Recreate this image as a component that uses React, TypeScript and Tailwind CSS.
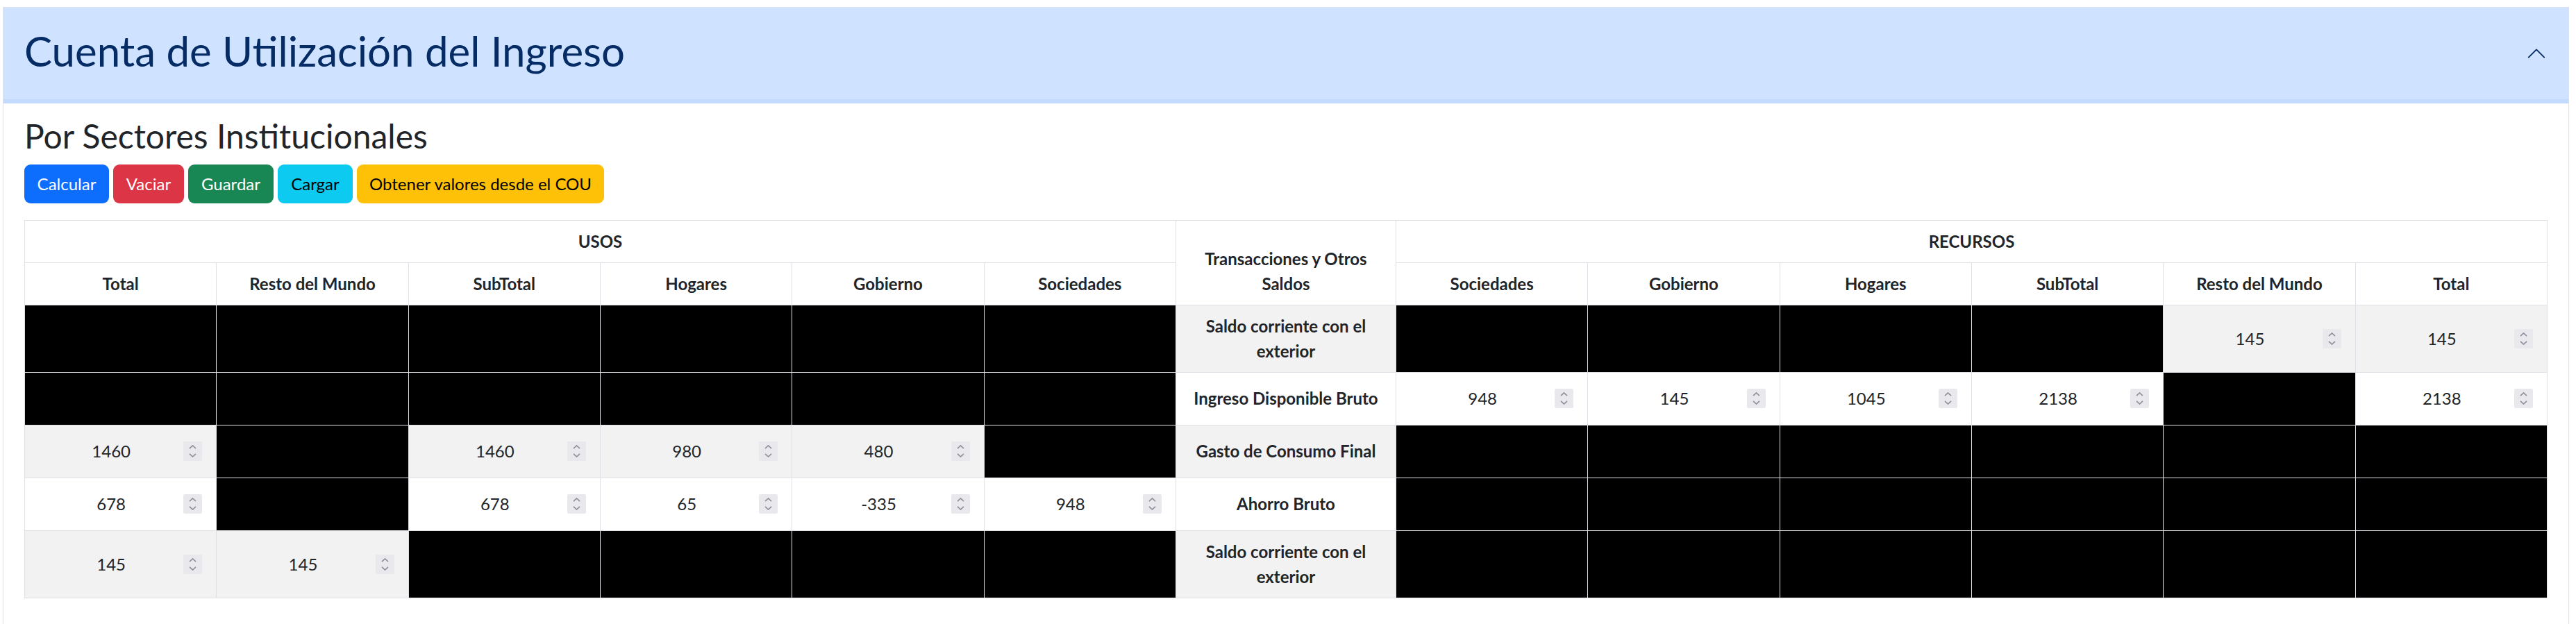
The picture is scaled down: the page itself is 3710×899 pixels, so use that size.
import React from 'react';

type Cell = string | null;
interface Row {
  label: string[];
  usos: Cell[];
  recursos: Cell[];
}

const N: Cell[] = [null, null, null, null, null, null];

const rows: Row[] = [
  { label: ['Saldo corriente con el', 'exterior'], usos: N, recursos: [null, null, null, null, '145', '145'] },
  { label: ['Ingreso Disponible Bruto'], usos: N, recursos: ['948', '145', '1045', '2138', null, '2138'] },
  { label: ['Gasto de Consumo Final'], usos: ['1460', null, '1460', '980', '480', null], recursos: N },
  { label: ['Ahorro Bruto'], usos: ['678', null, '678', '65', '-335', '948'], recursos: N },
  { label: ['Saldo corriente con el', 'exterior'], usos: ['145', '145', null, null, null, null], recursos: N },
];

const usosCols = ['Total', 'Resto del Mundo', 'SubTotal', 'Hogares', 'Gobierno', 'Sociedades'];
const recursosCols = ['Sociedades', 'Gobierno', 'Hogares', 'SubTotal', 'Resto del Mundo', 'Total'];

const thCls =
  'border border-[#dee2e6] bg-white px-[12px] py-[12px] text-center align-bottom font-bold text-[24px] leading-[36px] text-[#212529]';

function Spinner() {
  return (
    <div className="flex h-[28px] w-[27px] shrink-0 flex-col items-center justify-center gap-[6px] rounded-[2px] bg-[#e9e9ed]">
      <svg width="11" height="6" viewBox="0 0 11 6" fill="none">
        <path d="M1 5.2L5.5 1L10 5.2" stroke="#8f8f9d" strokeWidth="1.7" />
      </svg>
      <svg width="11" height="6" viewBox="0 0 11 6" fill="none">
        <path d="M1 0.8L5.5 5L10 0.8" stroke="#8f8f9d" strokeWidth="1.7" />
      </svg>
    </div>
  );
}

function NumCell({ value, striped }: { value: Cell; striped: boolean }) {
  const bg = value === null ? 'bg-black' : striped ? 'bg-[#f2f2f2]' : 'bg-white';
  return (
    <td className={`border border-[#dee2e6] p-[12px] align-middle ${bg}`}>
      {value !== null && (
        <div className="flex h-[51px] items-center px-[8px]">
          <span className="flex-1 text-center text-[24px] leading-[36px] text-[#212529]">{value}</span>
          <Spinner />
        </div>
      )}
    </td>
  );
}

const buttons = [
  { label: 'Calcular', cls: 'w-[122px] bg-[#0d6efd] text-white' },
  { label: 'Vaciar', cls: 'w-[102px] bg-[#dc3545] text-white' },
  { label: 'Guardar', cls: 'w-[123px] bg-[#198754] text-white' },
  { label: 'Cargar', cls: 'w-[108px] bg-[#0dcaf0] text-black' },
  { label: 'Obtener valores desde el COU', cls: 'w-[356px] bg-[#ffc107] text-black' },
];

export default function App() {
  return (
    <div className="h-screen w-full overflow-hidden bg-white pl-[4px] pr-[10px] pt-[10px] font-['Lato','Noto_Sans',sans-serif]">
      <div className="min-h-[940px] border border-[#dee2e6]">
        <div className="flex h-[132px] items-center bg-[#cfe2ff] pl-[30px] pr-[31px]">
          <div className="mb-[8px] flex-1 text-[60px] font-normal leading-[72px] text-[#052c65]">
            Cuenta de Utilización del Ingreso
          </div>
          <svg
            viewBox="0 0 16 16"
            className="h-[30px] w-[30px] shrink-0"
            fill="none"
            stroke="#052c65"
            strokeLinecap="round"
            strokeLinejoin="round"
          >
            <path d="M2 11L8 5L14 11" />
          </svg>
        </div>
        <div className="h-[6px] bg-[#c3dbfe]" />
        <div className="px-[30px] pt-[18px]">
          <h2 className="mb-[12px] text-[48px] font-normal leading-[57.6px] text-[#212529]">
            Por Sectores Institucionales
          </h2>
          <div className="mb-[24px] flex gap-[6px]">
            {buttons.map((b) => (
              <button
                key={b.label}
                className={`flex h-[56px] items-center justify-center rounded-[9px] text-[24px] leading-[36px] ${b.cls}`}
              >
                {b.label}
              </button>
            ))}
          </div>
          <table className="w-full table-fixed border-collapse">
            <colgroup>
              {usosCols.map((_, i) => (
                <col key={`u${i}`} />
              ))}
              <col className="w-[317px]" />
              {recursosCols.map((_, i) => (
                <col key={`r${i}`} />
              ))}
            </colgroup>
            <thead>
              <tr className="h-[61px]">
                <th colSpan={6} className={thCls}>
                  USOS
                </th>
                <th rowSpan={2} className={thCls}>
                  Transacciones y Otros
                  <br />
                  Saldos
                </th>
                <th colSpan={6} className={thCls}>
                  RECURSOS
                </th>
              </tr>
              <tr className="h-[61px]">
                {usosCols.map((c, i) => (
                  <th key={`uh${i}`} className={`${thCls} whitespace-nowrap`}>
                    {c}
                  </th>
                ))}
                {recursosCols.map((c, i) => (
                  <th key={`rh${i}`} className={`${thCls} whitespace-nowrap`}>
                    {c}
                  </th>
                ))}
              </tr>
            </thead>
            <tbody>
              {rows.map((r, ri) => {
                const striped = ri % 2 === 0;
                return (
                  <tr key={ri} className={r.label.length > 1 ? 'h-[97px]' : 'h-[76px]'}>
                    {r.usos.map((v, i) => (
                      <NumCell key={`u${i}`} value={v} striped={striped} />
                    ))}
                    <td
                      className={`whitespace-nowrap border border-[#dee2e6] px-[12px] py-[12px] text-center align-middle text-[24px] font-bold leading-[36px] text-[#212529] ${
                        striped ? 'bg-[#f2f2f2]' : 'bg-white'
                      }`}
                    >
                      {r.label.map((l, li) => (
                        <React.Fragment key={li}>
                          {li > 0 && <br />}
                          {l}
                        </React.Fragment>
                      ))}
                    </td>
                    {r.recursos.map((v, i) => (
                      <NumCell key={`r${i}`} value={v} striped={striped} />
                    ))}
                  </tr>
                );
              })}
            </tbody>
          </table>
        </div>
      </div>
    </div>
  );
}
